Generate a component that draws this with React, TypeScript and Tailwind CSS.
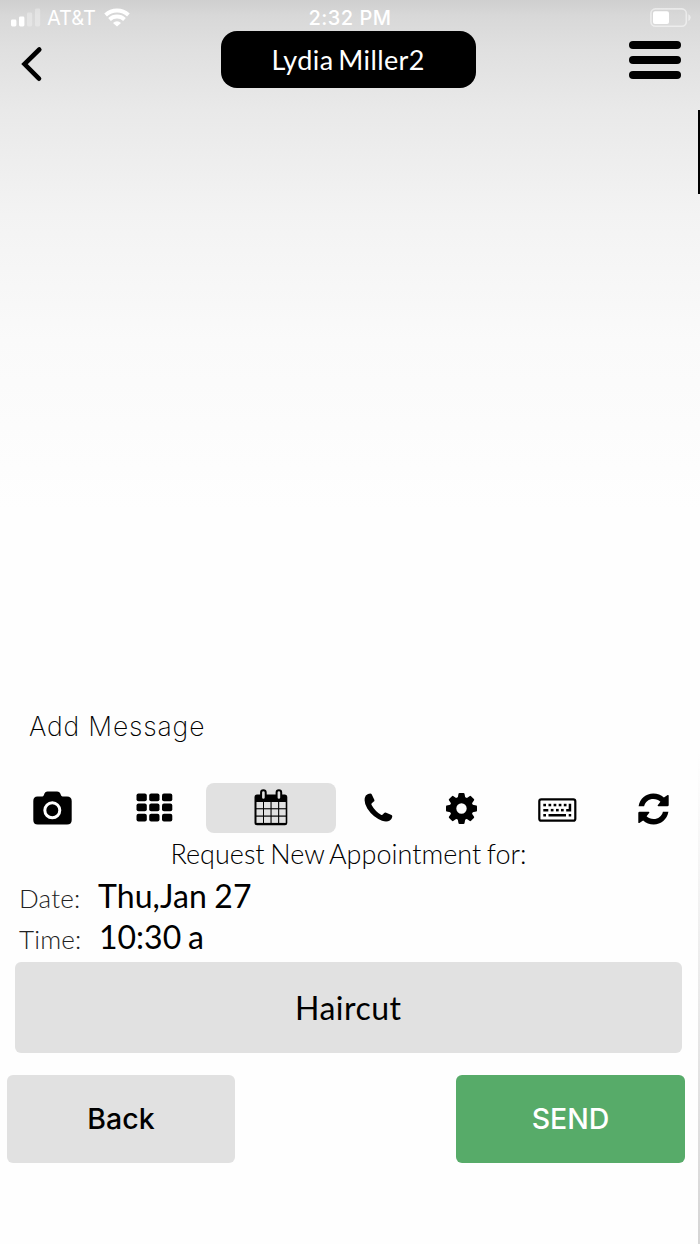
import React from 'react';

function SignalIcon() {
    return (
        <svg className="w-[30px] h-[19px]" viewBox="0 0 30 19" fill="#fff">
            <rect x="0" y="11.5" width="5.4" height="7" rx="1.4" />
            <rect x="8" y="8.5" width="5.4" height="10" rx="1.4" />
            <rect x="16" y="4.5" width="5.2" height="14" rx="1.4" opacity=".3" />
            <rect x="24" y="0.5" width="5.2" height="18" rx="1.4" opacity=".3" />
        </svg>
    );
}

function WifiIcon() {
    return (
        <svg className="w-[26px] h-[19px]" viewBox="0 0 26 19" fill="none" stroke="#fff" strokeWidth="3.9">
            <path d="M1.600 7A16.600 16.600 0 0 1 24.400 7" />
            <path d="M5.500 11.500A11 11 0 0 1 20.500 11.500" />
            <path d="M13 18.600L9 14.900A5.800 5.800 0 0 1 17 14.900Z" fill="#fff" stroke="none" />
        </svg>
    );
}

function BatteryIcon() {
    return (
        <svg className="w-[42px] h-[20px]" viewBox="0 0 42 20">
            <rect x="0.900" y="0.900" width="35.400" height="17.400" rx="4.500" fill="none" stroke="#fff" strokeOpacity=".5" strokeWidth="1.600" />
            <rect x="3" y="3.300" width="16" height="12.600" rx="2" fill="#fff" />
            <path d="M38.300 6.200q2.400 1 2.400 3.400t-2.400 3.400z" fill="#fff" opacity=".5" />
        </svg>
    );
}

function CameraIcon() {
    return (
        <svg className="w-[39px] h-[34px]" viewBox="0 0 39 34">
            <path d="M4.500 5.500H9.500Q10.500 5.500 11 3.800Q12 0.500 14.500 0.500H24Q26.800 0.500 27.800 3.800Q28.200 5.500 29.500 5.500H34Q38.700 5.500 38.700 10V29Q38.700 33.500 34 33.500H4.800Q0.300 33.500 0.300 29V10Q0.300 5.500 4.500 5.500Z" />
            <circle cx="19.300" cy="19.300" r="7.500" fill="none" stroke="#fff" strokeWidth="3" />
        </svg>
    );
}

function GridIcon() {
    return (
        <svg className="w-[37px] h-[30px]" viewBox="0 0 37 30">
            {[0.5, 10.5, 20.7].map((y) =>
                [0.5, 13.2, 26].map((x) => (
                    <rect key={`${x}-${y}`} x={x} y={y} width="10.300" height="7.800" rx="2" />
                ))
            )}
        </svg>
    );
}

function CalendarIcon() {
    return (
        <svg className="w-[34px] h-[37px]" viewBox="0 0 34 37">
            <path d="M3 5.500H31Q33.300 5.500 33.300 8V34Q33.300 36.300 31 36.300H3Q0.500 36.300 0.500 34V8Q0.500 5.500 3 5.500Z" />
            {[13, 20.3, 27.7].map((y) =>
                [2.5, 10, 17.6, 25.2].map((x) => (
                    <rect key={`${x}-${y}`} x={x} y={y} width="6.500" height="6.200" fill="#e1e1e1" />
                ))
            )}
            <rect x="7.100" y="1.200" width="4.600" height="9.600" rx="2.300" fill="#e1e1e1" stroke="#000" strokeWidth="2" />
            <rect x="22.600" y="1.200" width="4.600" height="9.600" rx="2.300" fill="#e1e1e1" stroke="#000" strokeWidth="2" />
        </svg>
    );
}

function PhoneIcon() {
    return (
        <svg className="w-[29px] h-[30px]" viewBox="0 0 29 30">
            <path d="M1.800 2.600Q4 .6 6.300.6Q7.300.6 7.800 1.600L10.300 6.700Q10.700 7.900 9.800 8.600L7.800 10.200Q7.100 10.900 7.600 11.900Q11 18 17 21.800Q18 22.300 18.800 21.500L20.100 20Q21 19.100 22.200 19.700L27.500 22.100Q28.500 22.700 28.200 23.900Q27.600 26.500 25.800 27.600Q22.500 29.300 18 27.700Q9 24.400 3.300 15.600Q-1.200 7.700 1.800 2.600Z" />
        </svg>
    );
}

function GearIcon() {
    return (
        <svg className="w-[32px] h-[32px]" viewBox="-16.500 -16.500 32 32">
            <circle r="8.500" fill="none" stroke="#000" strokeWidth="6.600" />
            {[0, 45, 90, 135, 180, 225, 270, 315].map((angle) => (
                <path key={angle} transform={`rotate(${angle})`} d="M-3.900 -10L-3 -14.800Q-2.800 -15.500 -2 -15.500H2Q2.800 -15.500 3 -14.800L3.900 -10Z" />
            ))}
        </svg>
    );
}

function KeyboardIcon() {
    return (
        <svg className="w-[39px] h-[25px]" viewBox="0 0 39 25">
            <rect x="1.300" y="1.300" width="36" height="21.400" rx="2" fill="none" stroke="#000" strokeWidth="2.200" />
            {[5.3, 10.5, 15.6, 20.7, 25.8].map((x) => (
                <rect key={x} x={x} y="5.800" width="2.700" height="2.500" />
            ))}
            {[12.8, 18, 23].map((x) => (
                <rect key={x} x={x} y="10.900" width="2.700" height="2.500" />
            ))}
            <path d="M5.300 10.900h5v2.500h-5zM5.300 16.100h2.700v2.500H5.300zM10.500 16.100h17.500v2.500H10.500zM30.700 16.100h2.500v2.500h-2.500zM30.700 5.800h2.500v7.600h-5v-2.500h2.500z" />
        </svg>
    );
}

function RefreshIcon() {
    return (
        <svg className="w-[31px] h-[32px]" viewBox="0 0 31 32">
            <path id="arc" d="M0.600 13.300C1.800 5.700 8 .6 15.300 .6C19.500 .6 23 2 25.900 4.600L29.600 2.100Q30.700 1.600 30.700 2.800V12Q30.700 13.300 29.400 13.300H20.300Q19 13.100 19.900 12.100L22.400 8.700C20.500 6.900 18.200 6 15.400 6C10.800 6 7.200 8.700 6.100 13.300Z" />
            <use href="#arc" transform="rotate(180 15.500 16)" />
        </svg>
    );
}

export default function App() {
    return (
        <div className="relative w-[700px] h-[1244px] overflow-hidden font-[Lato,sans-serif] text-black bg-[linear-gradient(to_bottom,#cfcfcf_0px,#d8d8d8_16px,#e0e0e0_50px,#e9e9e9_110px,#f3f3f3_215px,#fafafa_340px,#fefefe_510px,#fefefe_100%)]">
            {/* Status bar */}
            <div className="h-[30px] grid grid-cols-3 items-start pt-[7.500px] pl-[11px] pr-[8px] font-[Inter,sans-serif] text-white">
                <div className="flex items-start">
                    <SignalIcon />
                    <span className="ml-[6px] w-[57px] whitespace-nowrap text-[20px] leading-[21px]">AT&amp;T</span>
                    <WifiIcon />
                </div>
                <div className="pr-[3px] text-center text-[20px] leading-[21px] font-medium tracking-[0.500px]">2:32 PM</div>
                <div className="flex justify-end">
                    <BatteryIcon />
                </div>
            </div>

            {/* Header */}
            <header className="h-[60px] flex items-start justify-between pl-[20px] pr-[19px]">
                <button className="mt-[15px] w-[52px]">
                    <svg className="w-[24px] h-[38px]" viewBox="20 45 24 38" fill="none" stroke="#000" strokeWidth="4.600" strokeLinecap="round">
                        <path d="M39.300 49.500L24.500 64L39 78.700" />
                    </svg>
                </button>
                <div className="mt-[0.500px] ml-[-4.500px] w-[254.500px] h-[57.500px] pt-[2px] rounded-[16px] bg-black flex items-center justify-center text-white text-[27px] tracking-[0.400px] [word-spacing:-2.500px]">
                    Lydia Miller2
                </div>
                <button className="mt-[11px] flex flex-col gap-[6.700px]">
                    <span className="block w-[52px] h-[8.200px] rounded-full bg-black" />
                    <span className="block w-[52px] h-[8.200px] rounded-full bg-black" />
                    <span className="block w-[52px] h-[8.200px] rounded-full bg-black" />
                </button>
            </header>

            {/* Message area */}
            <div className="h-[693px] flex items-end pl-[29px] pb-[41px]">
                <span className="font-[Inter,sans-serif] font-extralight text-[26.500px] leading-[32px] tracking-[0.850px]">Add Message</span>
            </div>

            {/* Toolbar */}
            <div className="h-[50px] flex items-center">
                <button className="w-[39px] ml-[33px]"><CameraIcon /></button>
                <button className="w-[37px] ml-[64px]"><GridIcon /></button>
                <button className="w-[130px] h-[50px] ml-[33px] pb-[2px] rounded-[8px] bg-[#e1e1e1] flex items-center justify-center"><CalendarIcon /></button>
                <button className="w-[29px] ml-[28px]"><PhoneIcon /></button>
                <button className="w-[32px] ml-[52px]"><GearIcon /></button>
                <button className="w-[39px] ml-[61px] pt-[4px]"><KeyboardIcon /></button>
                <button className="w-[31px] ml-[61px] pt-px"><RefreshIcon /></button>
            </div>

            {/* Appointment request */}
            <div className="h-[44px] pt-[4px] pr-[3px] text-center font-light text-[27px] leading-[33px] [word-spacing:-1.700px]">
                Request New Appointment for:
            </div>
            <div className="h-[85px] pl-[19px]">
                <div className="flex items-baseline h-[41px] mt-[-1px]">
                    <span className="w-[79px] font-light text-[26px] tracking-[0.200px] text-[#222]">Date:</span>
                    <span className="text-[32px] leading-[40px] tracking-[0.100px] [word-spacing:-1px]">Thu,Jan 27</span>
                </div>
                <div className="flex items-baseline h-[41px]">
                    <span className="w-[80px] font-light text-[26px] tracking-[0.200px] text-[#222]">Time:</span>
                    <span className="text-[32px] leading-[40px] [word-spacing:-1.500px]">10:30 a</span>
                </div>
            </div>
            <button className="ml-[15px] mt-px w-[666.500px] h-[91px] rounded-[6px] bg-[#e1e1e1] flex items-center justify-center text-[32px] tracking-[0.500px]">
                Haircut
            </button>

            {/* Actions */}
            <div className="mt-[22px] pl-[7px] pr-[15px] flex justify-between font-[Inter,sans-serif] text-[28.500px]">
                <button className="w-[228px] h-[88px] rounded-[6px] bg-[#e1e1e1] font-[450]">Back</button>
                <button className="w-[229px] h-[88px] rounded-[6px] bg-[#57ab69] text-white font-[450]">SEND</button>
            </div>

            {/* Scroll indicator and page edge */}
            <div className="absolute right-0 top-[110px] w-[2px] h-[84px] bg-black" />
            <div className="absolute right-0 top-[750px] bottom-0 w-[2px] bg-gradient-to-b from-transparent to-[#d5d5d5]" />
        </div>
    );
}
